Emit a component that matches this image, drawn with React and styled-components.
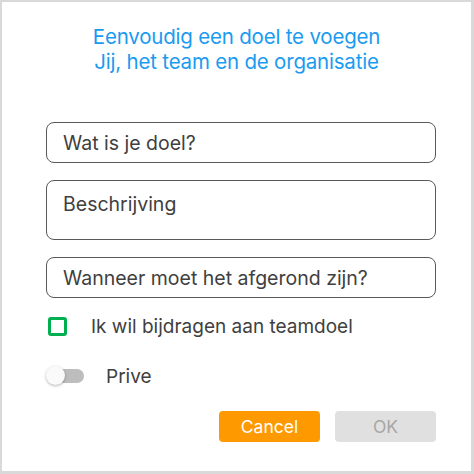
import React from "react";
import styled, { createGlobalStyle } from "styled-components";

const Global = createGlobalStyle`
  html, body { margin: 0; padding: 0; background: #fff; }
  * { box-sizing: border-box; }
`;

const Frame = styled.div`
  width: 474px;
  height: 474px;
  border: 2px solid #d9d9d9;
  border-right-width: 3px;
  border-bottom-width: 3px;
  background: #fff;
  font-family: Inter, "Noto Sans", sans-serif;
  display: flex;
  flex-direction: column;
`;

const Title = styled.h1`
  margin: 22px 0 0;
  text-align: center;
  font-size: 20.5px;
  font-weight: 400;
  line-height: 25px;
  color: #1a9bf0;
  letter-spacing: -0.2px;
`;

const Form = styled.div`
  padding: 0 35px 0 44px;
  margin-top: 48px;
  display: flex;
  flex-direction: column;
`;

const Field = styled.div`
  height: ${(p) => p.$h}px;
  border: 1px solid #595959;
  border-radius: 8px;
  padding: ${(p) => (p.$multi ? "11px 16px 0" : "0 16px")};
  display: flex;
  align-items: ${(p) => (p.$multi ? "flex-start" : "center")};
  font-size: 19.5px;
  color: #404040;
  margin-bottom: 17px;
`;

const Row = styled.div`
  display: flex;
  align-items: center;
  height: 22px;
  margin-bottom: ${(p) => p.$mb}px;
  gap: ${(p) => p.$gap}px;
  padding-left: ${(p) => p.$pl}px;
  font-size: 19px;
  color: #404040;
`;

const Check = styled.span`
  width: 19px;
  height: 19px;
  border: 3px solid #00b050;
  border-radius: 3px;
  display: inline-block;
  flex: none;
`;

const Toggle = styled.span`
  position: relative;
  width: 38px;
  height: 20px;
  display: inline-block;
  flex: none;
`;

const Track = styled.span`
  position: absolute;
  left: 7px;
  right: 0;
  top: 3px;
  height: 14px;
  border-radius: 7px;
  background: #bdbdbd;
`;

const Knob = styled.span`
  position: absolute;
  left: 0;
  top: 0;
  width: 19px;
  height: 19px;
  border-radius: 50%;
  background: #fafafa;
  box-shadow: 0 1px 3px rgba(0, 0, 0, 0.3);
`;

const Buttons = styled.div`
  display: flex;
  justify-content: flex-end;
  gap: 15px;
  margin-top: 24px;
`;

const Button = styled.button`
  width: 101px;
  height: 31px;
  border: none;
  border-radius: 4px;
  font-family: inherit;
  font-size: 17.5px;
  background: ${(p) => (p.$primary ? "#ff9900" : "#e0e0e0")};
  color: ${(p) => (p.$primary ? "#fff" : "#a6a6a6")};
  padding: 0;
`;

export default function App() {
  return (
    <>
      <Global />
      <Frame>
        <Title>
          Eenvoudig een doel te voegen
          <br />
          Jij, het team en de organisatie
        </Title>
        <Form>
          <Field $h={41}>Wat is je doel?</Field>
          <Field $h={60} $multi>
            Beschrijving
          </Field>
          <Field $h={41}>Wanneer moet het afgerond zijn?</Field>
          <Row $mb={28} $gap={24} $pl={2}>
            <Check />
            Ik wil bijdragen aan teamdoel
          </Row>
          <Row $mb={0} $gap={22} $pl={0}>
            <Toggle>
              <Track />
              <Knob />
            </Toggle>
            Prive
          </Row>
          <Buttons>
            <Button $primary>Cancel</Button>
            <Button>OK</Button>
          </Buttons>
        </Form>
      </Frame>
    </>
  );
}
